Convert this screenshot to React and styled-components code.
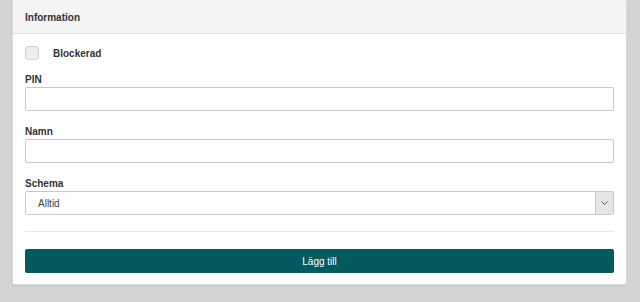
import React, { useState } from "react";
import styled, { createGlobalStyle } from "styled-components";

const GlobalStyle = createGlobalStyle`
  html, body {
    margin: 0;
    padding: 0;
    background: #d4d4d4;
    font-family: "Liberation Sans", Arial, sans-serif;
  }
`;

const Page = styled.div`
  width: 640px;
  height: 302px;
  padding: 0 13px 0 12px;
  box-sizing: border-box;
`;

const Card = styled.div`
  background: #fff;
  border: 1px solid #dcdcdc;
  border-top: none;
  border-radius: 0 0 3px 3px;
  box-shadow: 0 1px 2px rgba(0, 0, 0, 0.08);
  height: 285px;
  box-sizing: border-box;
  display: flex;
  flex-direction: column;
`;

const Header = styled.div`
  background: #f4f4f4;
  border-bottom: 1px solid #e0e0e0;
  height: 34px;
  box-sizing: border-box;
  display: flex;
  align-items: center;
  padding: 1px 12px 0 12px;
  font-size: 10px;
  font-weight: bold;
  color: #333;
`;

const Body = styled.div`
  padding: 12px 12px 0 12px;
  display: flex;
  flex-direction: column;
`;

const CheckRow = styled.label`
  display: flex;
  align-items: center;
  gap: 14px;
  height: 14px;
  margin-bottom: 13px;
  font-size: 10px;
  font-weight: bold;
  color: #333;
`;

const Check = styled.span`
  width: 14px;
  height: 14px;
  box-sizing: border-box;
  border: 1px solid #d2d2d2;
  border-radius: 3px;
  background: ${(p) => (p.checked ? "#055b61" : "#eeeeee")};
`;

const Field = styled.div`
  display: flex;
  flex-direction: column;
  margin-bottom: ${(p) => p.gap || 0}px;
`;

const Label = styled.div`
  font-size: 10px;
  font-weight: bold;
  color: #333;
  height: 14px;
  line-height: 14px;
`;

const Input = styled.input`
  height: 24px;
  box-sizing: border-box;
  border: 1px solid #c8c8c8;
  border-radius: 2px;
  padding: 0 10px;
  font-size: 10px;
  font-family: inherit;
  outline: none;
`;

const SelectBox = styled.div`
  height: 24px;
  box-sizing: border-box;
  border: 1px solid #c8c8c8;
  border-radius: 2px;
  display: flex;
  align-items: stretch;
  font-size: 10px;
  color: #444;
`;

const SelectValue = styled.div`
  flex: 1;
  display: flex;
  align-items: center;
  padding-left: 12px;
`;

const Arrow = styled.div`
  width: 17px;
  background: #e6e6e6;
  border-left: 1px solid #c8c8c8;
  display: flex;
  align-items: center;
  justify-content: center;
`;

const Divider = styled.hr`
  border: none;
  border-top: 1px solid #e8e8e8;
  margin: 16px 0 17px 0;
`;

const Button = styled.button`
  height: 24px;
  background: #055a60;
  color: #fff;
  border: none;
  border-radius: 2px;
  font-size: 10px;
  font-family: inherit;
  cursor: pointer;
`;

const App = () => {
  const [blocked, setBlocked] = useState(false);

  return (
    <Page>
      <GlobalStyle />
      <Card>
        <Header>Information</Header>
        <Body>
          <CheckRow onClick={() => setBlocked(!blocked)}>
            <Check checked={blocked} />
            Blockerad
          </CheckRow>
          <Field gap={14}>
            <Label>PIN</Label>
            <Input type="text" />
          </Field>
          <Field gap={14}>
            <Label>Namn</Label>
            <Input type="text" />
          </Field>
          <Field>
            <Label>Schema</Label>
            <SelectBox>
              <SelectValue>Alltid</SelectValue>
              <Arrow>
                <svg width="7" height="4" viewBox="0 0 7 4">
                  <path d="M0.5 0.5 L3.5 3.5 L6.5 0.5" fill="none" stroke="#555" strokeWidth="1" />
                </svg>
              </Arrow>
            </SelectBox>
          </Field>
          <Divider />
          <Button>Lägg till</Button>
        </Body>
      </Card>
    </Page>
  );
};

export default App;
